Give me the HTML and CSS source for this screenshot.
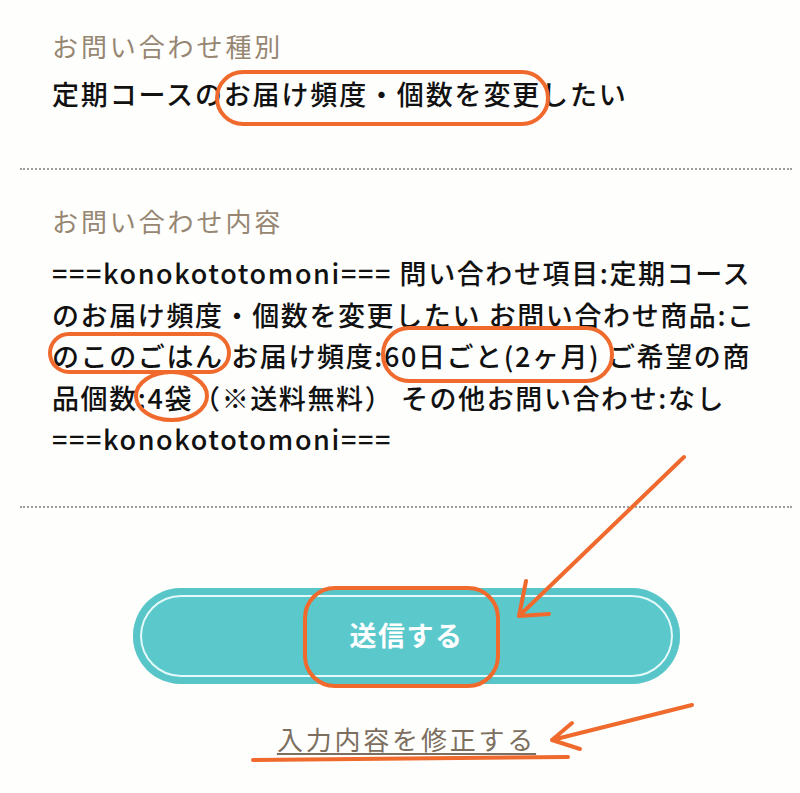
FILE: index.html
```html
<!DOCTYPE html>
<html lang="ja">
<head>
<meta charset="utf-8">
<title>確認画面</title>
<link rel="stylesheet" href="styles.css">
</head>
<body>
<div class="page">
  <section class="field field-first">
    <div class="field-label">お問い合わせ種別</div>
    <div class="field-value">定期コースのお届け頻度・個数を変更したい</div>
  </section>
  <hr class="divider">
  <section class="field field-second">
    <div class="field-label">お問い合わせ内容</div>
    <div class="field-body">===konokototomoni=== 問い合わせ項目:定期コース<br>のお届け頻度・個数を変更したい お問い合わせ商品:こ<br>のこのごはん お届け頻度:60日ごと(2ヶ月) ご希望の商<br>品個数:4袋（※送料無料） その他お問い合わせ:なし<br>===konokototomoni===</div>
  </section>
  <hr class="divider divider-bottom">
  <div class="actions">
    <button class="submit" type="button">送信する</button>
    <a class="back-link" href="#">入力内容を修正する</a>
  </div>

  <svg class="marks" width="800" height="793" viewBox="0 0 800 793" aria-hidden="true">
    <g fill="none" stroke="#ef6a2c" stroke-width="4" stroke-linecap="round" stroke-linejoin="round">
      <rect x="217" y="72" width="331" height="52" rx="26"/>
      <rect x="50" y="334" width="179" height="38" rx="19"/>
      <ellipse cx="171.5" cy="396" rx="35.5" ry="24"/>
      <rect x="383" y="328" width="229" height="53" rx="26"/>
      <rect x="305" y="588" width="193" height="98" rx="30"/>
      <path d="M684 457 L519 616 M526 581 L519 616 L549 614"/>
      <path d="M253 760 L568 757"/>
      <path d="M692 705 L552 740 M572 723 L552 740 L580 749"/>
    </g>
  </svg>
</div>
</body>
</html>
```

FILE: styles.css
```css
* { box-sizing: border-box; }

html, body {
  margin: 0;
  padding: 0;
  background: #ffffff;
}

body {
  font-family: "Noto Sans CJK JP", "Noto Sans", sans-serif;
  color: #111111;
}

.page {
  position: relative;
  width: 800px;
  height: 793px;
  overflow: hidden;
  background: #fefefd;
}

.field {
  padding-left: 52px;
}

.field-first {
  padding-top: 28px;
}

.field-label {
  font-size: 26px;
  line-height: 36px;
  letter-spacing: 2.9px;
  color: #968672;
  font-weight: 400;
}

.field-value {
  margin-top: 10px;
  font-size: 27px;
  line-height: 40px;
  letter-spacing: 1.85px;
  font-weight: 500;
  white-space: nowrap;
}

.divider {
  margin: 54px 8px 0 20px;
  height: 0;
  border: 0;
  border-top: 2px dotted #9d9d9d;
}

.field-second {
  padding-top: 33px;
}

.field-body {
  margin-top: 13px;
  font-size: 27px;
  line-height: 41.5px;
  letter-spacing: 1.6px;
  font-weight: 500;
  white-space: nowrap;
}

.divider-bottom {
  margin-top: 46px;
}

.actions {
  margin-left: 133px;
  width: 547px;
  padding-top: 80px;
  display: flex;
  flex-direction: column;
  align-items: center;
}

.submit {
  width: 547px;
  height: 96px;
  border: 0;
  border-radius: 48px;
  background: #5bc9cc;
  box-shadow: inset 0 0 0 7px #58c5c8, inset 0 0 0 9px #e4f9f9;
  color: #ffffff;
  font-family: "Noto Sans CJK JP", "Noto Sans", sans-serif;
  font-size: 27px;
  font-weight: 700;
  letter-spacing: 1.5px;
  padding: 0 0 2px 0;
}

.back-link {
  margin-top: 37px;
  font-size: 26px;
  line-height: 36px;
  letter-spacing: 2.8px;
  color: #7c6f5f;
  text-decoration: underline;
  text-decoration-thickness: 1.5px;
  text-underline-offset: 3px;
}

.marks {
  position: absolute;
  left: 0;
  top: 0;
  pointer-events: none;
}
```
